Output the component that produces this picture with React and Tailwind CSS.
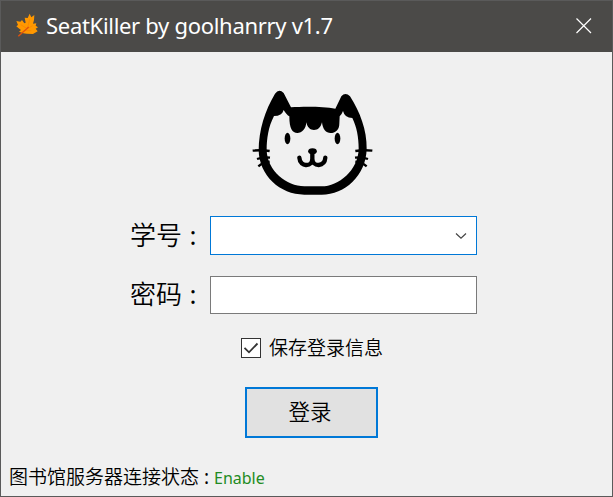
import React from "react";

function MapleLeaf() {
  return (
    <svg viewBox="0 0 108 108" className="h-9 w-9 shrink-0">
      <path
        d="M65 17 L70 28 L79 21 L78 36 L75 47 L85 46 L83 53 L90 58 L83 62 L89 70 L75 78 L56 77 L46 76 L33 71 L39 66 L32 61 L25 55 L30 51 L25 39 L37 41 L42 36 L49 46 L53 44 L50 29 L59 30 Z"
        fill="#ff9800"
      />
      <path d="M65 34 L58 62 L74 53 M58 62 L38 50 M51 68 L70 68" stroke="#f98a00" strokeWidth="3" fill="none" />
      <path d="M62 57 L31 85" stroke="#e0520c" strokeWidth="4" fill="none" />
    </svg>
  );
}

function TitleBar() {
  return (
    <header className="flex h-[51px] shrink-0 items-center bg-[#4b4a48] pb-px pl-[7px] pr-[20px]">
      <MapleLeaf />
      <h1 className="ml-[2px] grow whitespace-nowrap pb-[2px] text-[22px] leading-[30px] tracking-[-0.3px] text-white">
        SeatKiller by goolhanrry v1.7
      </h1>
      <svg viewBox="0 0 16 16" className="h-4 w-4 shrink-0">
        <path d="M0.500 0.500 L15 15 M15 0.500 L0.500 15" stroke="#fff" strokeWidth="1.2" />
      </svg>
    </header>
  );
}

function CatLogo() {
  return (
    <svg viewBox="0 0 405 360" className="block h-[120px] w-[135px]">
      <path
        d="M138 76 C175 73 235 73 271 80 L289 43 Q301 29 315 43 C345 90 366 145 365 200 C363 280 300 338 230 338 L178 338 C105 338 42 280 41 205 C41 145 60 85 90 35 Q102 19 116 33 Z
           M133 103 Q125 99 116 84 Q111 102 87 102 C70 135 65 170 65 205 C67 267 125 313 178 313 L230 313 C280 313 340 265 341 200 C341 165 335 135 322 108 Q299 108 294 87 Q290 98 284 103 L283 125 C283 144 270 153 257 153 C243 153 233 142 231 121 C227 137 219 144 207 144 C196 144 187 137 184 121 C183 141 171 153 157 153 C142 153 133 141 133 103 Z"
        fillRule="evenodd"
      />
      <ellipse cx="127.500" cy="169.500" rx="8.500" ry="17" />
      <ellipse cx="277.500" cy="169.500" rx="8.500" ry="17" />
      <ellipse cx="202.500" cy="208" rx="13" ry="9" />
      <path
        d="M202 208 L202 230 M163 227 C164 243 175 250 184 249 C195 249 202 241 202 230 C202 241 210 249 221 249 C232 248 240 241 241 227"
        fill="none"
        stroke="#000"
        strokeWidth="13"
        strokeLinecap="round"
      />
      <path
        d="M23 206 Q48 203 74 207 M36 231 Q53 225 75 227 M40 253 Q54 241 74 239 M382 206 Q357 203 331 207 M369 231 Q352 225 330 227 M365 253 Q351 241 331 239"
        fill="none"
        stroke="#000"
        strokeWidth="7"
      />
    </svg>
  );
}

function Label({ children }) {
  return (
    <label className="w-[80px] shrink-0 whitespace-nowrap text-[26px] leading-[38px]">
      {children}<span className="ml-[7.5px] font-normal">:</span>
    </label>
  );
}

export default function App() {
  return (
    <div className="flex h-[497px] w-[613px] flex-col overflow-hidden border border-[#5a5a5a] bg-[#f0f0f0] font-['Noto_Sans','Noto_Sans_CJK_SC',sans-serif] text-black">
      <TitleBar />
      <main className="flex grow flex-col pt-[30px] font-[350]">
        <div className="pl-[244px]">
          <CatLogo />
        </div>
        <form className="mt-[14px] flex flex-col" onSubmit={(e) => e.preventDefault()}>
          <div className="flex pl-[129px]">
            <Label>学号</Label>
            <div className="flex h-[39px] w-[267px] items-center justify-end border border-[#0078d7] bg-white pr-[9px]">
              <svg viewBox="0 0 12 8" className="h-2 w-3">
                <path d="M1 1.500 L6 6.200 L11 1.500" fill="none" stroke="#444" strokeWidth="1.200" />
              </svg>
            </div>
          </div>
          <div className="mt-[20px] flex pl-[129px]">
            <Label>密码</Label>
            <div className="mt-px h-[38px] w-[267px] border border-[#7a7a7a] bg-white" />
          </div>
          <div className="mt-[20px] flex h-7 items-center pl-[240px]">
            <svg viewBox="0 0 20 20" className="h-5 w-5 shrink-0">
              <rect x="0.500" y="0.500" width="19" height="19" fill="#fff" stroke="#333" />
              <path d="M3.500 9.800 L8 14.300 L16.500 5.500" fill="none" stroke="#333" strokeWidth="1.800" />
            </svg>
            <span className="ml-2 text-[19px] leading-7">保存登录信息</span>
          </div>
          <button className="ml-[244px] mt-[25px] h-[51px] w-[133px] border-2 border-[#0078d7] bg-[#e1e1e1] pb-[2px] pr-[3px] font-[350] text-[21.5px] leading-[45px]">
            登录
          </button>
        </form>
        <footer className="mt-[25px] flex h-7 items-center whitespace-nowrap pl-[8px] text-[19px] leading-7">
          图书馆服务器连接状态
          <span className="ml-[5px] w-[10px] font-normal">:</span>
          <span className="pt-px text-[16px] font-normal text-[#228b22]">Enable</span>
        </footer>
      </main>
    </div>
  );
}
